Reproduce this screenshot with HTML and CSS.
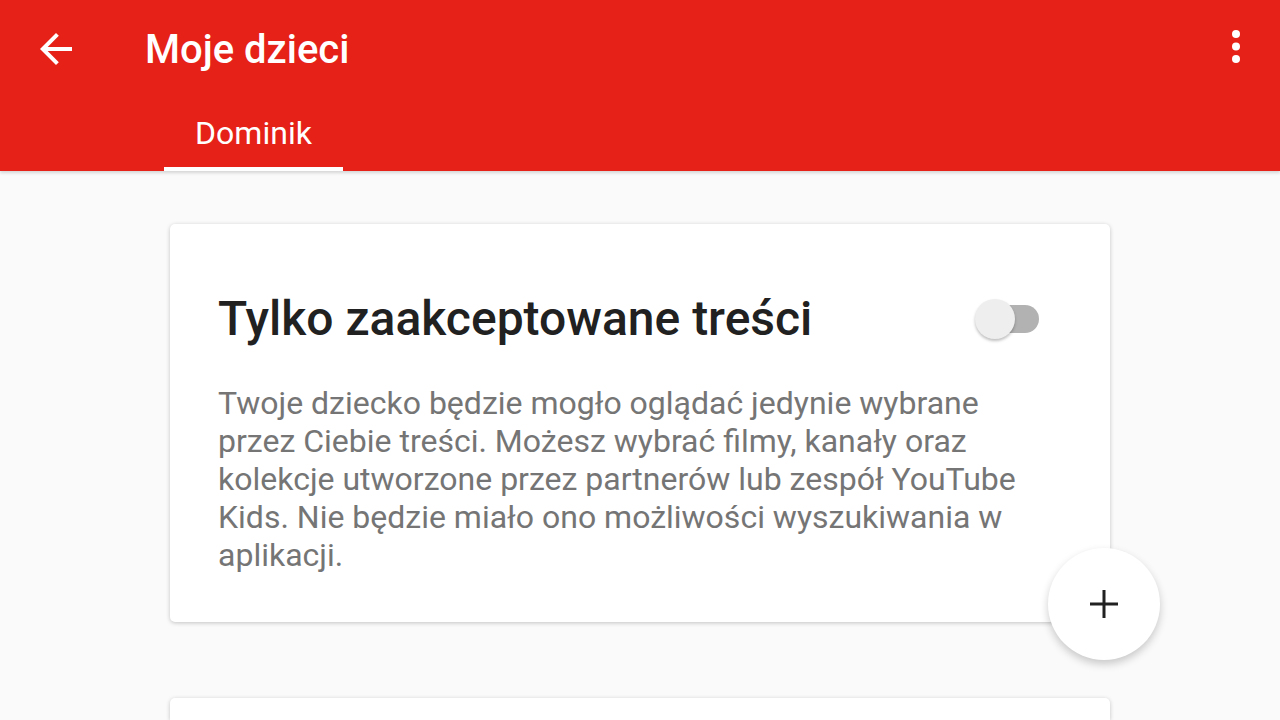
FILE: index.html
```html
<!DOCTYPE html>
<html lang="pl">

<head>
	<meta charset="UTF-8">
	<title>Moje dzieci</title>
	<link rel="stylesheet" href="styles.css">
</head>

<body>
	<header class="app-bar">
		<div class="toolbar">
			<button class="icon-btn back" aria-label="Wstecz">
				<svg width="48" height="48" viewBox="0 0 24 24"><path d="M20 11H7.83l5.59-5.59L12 4l-8 8 8 8 1.41-1.41L7.83 13H20v-2z" fill="#fff"/></svg>
			</button>
			<h1 class="title">Moje dzieci</h1>
			<button class="icon-btn menu" aria-label="Więcej">
				<svg width="8" height="34" viewBox="0 0 8 34"><circle cx="4" cy="4" r="4" fill="#fff"/><circle cx="4" cy="16.5" r="4" fill="#fff"/><circle cx="4" cy="29" r="4" fill="#fff"/></svg>
			</button>
		</div>
		<nav class="tabs">
			<div class="tab active">Dominik</div>
		</nav>
	</header>

	<main class="content">
		<section class="card">
			<div class="card-head">
				<h2 class="card-title">Tylko zaakceptowane treści</h2>
				<div class="switch"><span class="track"></span><span class="knob"></span></div>
			</div>
			<p class="card-text">Twoje dziecko będzie mogło oglądać jedynie wybrane przez Ciebie treści. Możesz wybrać filmy, kanały oraz kolekcje utworzone przez partnerów lub zespół YouTube Kids. Nie będzie miało ono możliwości wyszukiwania w aplikacji.</p>
			<button class="fab" aria-label="Dodaj">
				<svg width="28" height="28" viewBox="0 0 28 28"><rect x="12.5" y="0" width="3" height="28" fill="#212121"/><rect x="0" y="12.5" width="28" height="3" fill="#212121"/></svg>
			</button>
		</section>
		<section class="card next"></section>
	</main>
</body>

</html>
```

FILE: styles.css
```css
* {
	box-sizing: border-box;
}

body {
	margin: 0;
	background: #fafafa;
	font-family: Roboto, "Noto Sans", sans-serif;
	overflow: hidden;
	height: 720px;
}

.app-bar {
	background: #e62117;
	color: #fff;
	height: 171px;
	display: flex;
	flex-direction: column;
	box-shadow: 0 2px 3px rgba(0, 0, 0, 0.15);
	position: relative;
	z-index: 1;
}

.toolbar {
	display: flex;
	align-items: center;
	height: 98px;
	padding: 0 40px 0 32px;
}

.icon-btn {
	background: none;
	border: 0;
	padding: 0;
	display: flex;
	cursor: pointer;
}

.menu {
	margin-top: -4px;
}

.title {
	margin: 0 0 0 65px;
	font-size: 40px;
	font-weight: 500;
	flex: 1;
}

.tabs {
	display: flex;
	padding-left: 164px;
	height: 73px;
}

.tab {
	width: 179px;
	display: flex;
	justify-content: center;
	align-items: center;
	font-size: 32px;
}

.tab.active {
	border-bottom: 4px solid #fff;
}

.content {
	padding: 53px 0 0 170px;
}

.card {
	position: relative;
	width: 940px;
	background: #fff;
	border-radius: 5px;
	box-shadow: 0 1px 4px rgba(0, 0, 0, 0.22);
	padding: 66px 48px 48px;
}

.card.next {
	margin-top: 76px;
	height: 22px;
	padding: 0;
	border-radius: 5px 5px 0 0;
}

.card-head {
	display: flex;
	align-items: center;
	justify-content: space-between;
	margin-bottom: 37px;
}

.card-title {
	margin: 0;
	font-size: 48px;
	font-weight: 500;
	color: #212121;
}

.switch {
	position: relative;
	width: 64px;
	height: 42px;
	margin-right: 23px;
}

.track {
	position: absolute;
	right: 0;
	top: 7px;
	width: 56px;
	height: 28px;
	border-radius: 14px;
	background: #b2b2b2;
}

.knob {
	position: absolute;
	left: 0;
	top: 1px;
	width: 40px;
	height: 40px;
	border-radius: 50%;
	background: #eeeeee;
	box-shadow: 0 2px 3px rgba(0, 0, 0, 0.25);
}

.card-text {
	margin: 0;
	font-size: 32px;
	line-height: 38px;
	color: #757575;
}

.fab {
	position: absolute;
	left: 878px;
	top: 324px;
	width: 112px;
	height: 112px;
	border-radius: 50%;
	border: 0;
	background: #fff;
	display: flex;
	align-items: center;
	justify-content: center;
	box-shadow: 0 4px 8px rgba(0, 0, 0, 0.2);
}
```
